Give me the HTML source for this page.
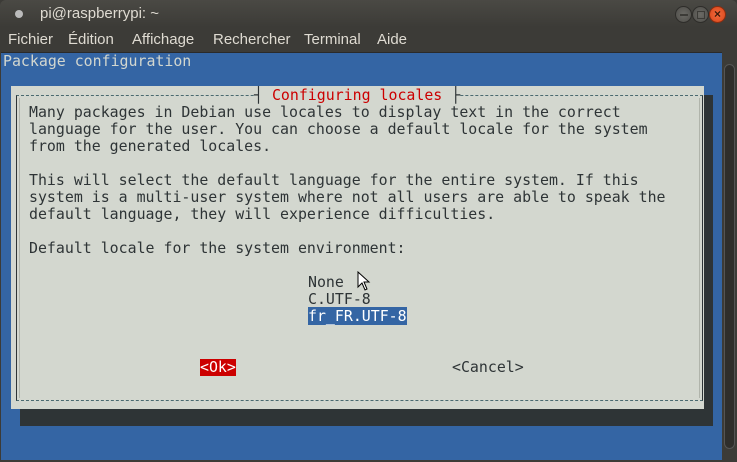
<!DOCTYPE html>
<html><head><meta charset="utf-8"><style>
*{margin:0;padding:0;box-sizing:border-box}
body{width:737px;height:462px;overflow:hidden;background:#3c3b37;position:relative;font-family:"Liberation Sans",sans-serif}
.title{position:absolute;left:0;top:0;width:737px;height:27px;background:linear-gradient(#4a4944,#3c3b37);border-radius:6px 6px 0 0}
.title span{position:absolute;left:40px;top:5px;color:#dfdbd2;font-size:15px}
.dot{position:absolute;left:15px;top:10px;width:8px;height:8px;border-radius:50%;background:#bbb;}
.btn{position:absolute;top:6px;width:17px;height:17px;border-radius:50%;background:radial-gradient(#6b6a65,#4e4d49);border:1px solid #2e2d2a}
.menu{position:absolute;left:0;top:27px;width:737px;height:26px;background:#3c3b37;color:#dfdbd2;font-size:15px}
.menu span{position:absolute;top:4px}
.term{position:absolute;left:1px;top:52px;width:721px;height:408px;background:#3465a4;border-top:1px solid #2a2a2a}
.sb{position:absolute;left:722px;top:52px;width:15px;height:410px;background:#3c3b37}
.sb div{position:absolute;left:2px;top:12px;width:11px;height:385px;border-radius:6px;background:#2f2e2b;border:1px solid #555}
.mono{font-family:"DejaVu Sans Mono","Liberation Mono",monospace;font-size:14.9px;line-height:17px;white-space:pre;position:absolute;color:#2e3436}
.shadow{position:absolute;left:20px;top:95px;width:693px;height:331px;background:#2e3436}
.dlg{position:absolute;left:11px;top:86px;width:693px;height:323px;background:#d3d7cf}
.frame{position:absolute;left:16px;top:95px;width:687px;height:306px;border:1px solid #2e3436;border-top:1px dashed #4a6a70;border-bottom:1px dashed #4a6a70}
.frame2{position:absolute;left:19px;top:98px;width:681px;height:300px;border:1px solid #b0b4ab;border-top:none;border-bottom:none}
</style></head><body>
<div class="title"><div class="dot"></div><span>pi@raspberrypi: ~</span>
<div class="btn" style="left:675px"><div style="position:absolute;left:4px;top:7px;width:8px;height:2px;background:#3c3b37"></div></div>
<div class="btn" style="left:692px"><div style="position:absolute;left:4px;top:4px;width:8px;height:8px;border:1.5px solid #3c3b37"></div></div>
<div class="btn" style="left:709px;background:radial-gradient(#f26a3d,#d9461a);border-color:#8a2d10"><div style="position:absolute;left:0;top:0;width:15px;height:15px;color:#3c1a0a;font-size:12px;line-height:15px;text-align:center;font-weight:bold">×</div></div>
</div>
<div class="menu"><span style="left:8px">Fichier</span><span style="left:68px">Édition</span><span style="left:132px">Affichage</span><span style="left:213px">Rechercher</span><span style="left:304px">Terminal</span><span style="left:377px">Aide</span></div>
<div class="term"></div>
<div class="sb"><div></div></div>
<div class="mono" style="left:3px;top:53px;color:#d3d7cf">Package configuration</div>
<div class="shadow"></div>
<div class="dlg"></div>
<div class="frame"></div>
<div class="frame2"></div>
<div class="mono" style="left:254px;top:87px;background:#d3d7cf">┤ <span style="color:#cc0000">Configuring locales</span> ├</div>
<div class="mono" style="left:29px;top:104px">Many packages in Debian use locales to display text in the correct
language for the user. You can choose a default locale for the system
from the generated locales.

This will select the default language for the entire system. If this
system is a multi-user system where not all users are able to speak the
default language, they will experience difficulties.

Default locale for the system environment:</div>
<div class="mono" style="left:308px;top:274px">None
C.UTF-8
<span style="background:#3465a4;color:#fff">fr_FR.UTF-8</span></div>
<div class="mono" style="left:200px;top:359px;background:#cc0000;color:#fff">&lt;Ok&gt;</div>
<div class="mono" style="left:452px;top:359px">&lt;Cancel&gt;</div>
<svg style="position:absolute;left:357px;top:271px" width="14" height="20" viewBox="0 0 14 20"><path d="M1 1 L1 16 L5 12 L8 19 L10 18 L7 11 L12 11 Z" fill="#fff" stroke="#000" stroke-width="1"/></svg>
</body></html>
